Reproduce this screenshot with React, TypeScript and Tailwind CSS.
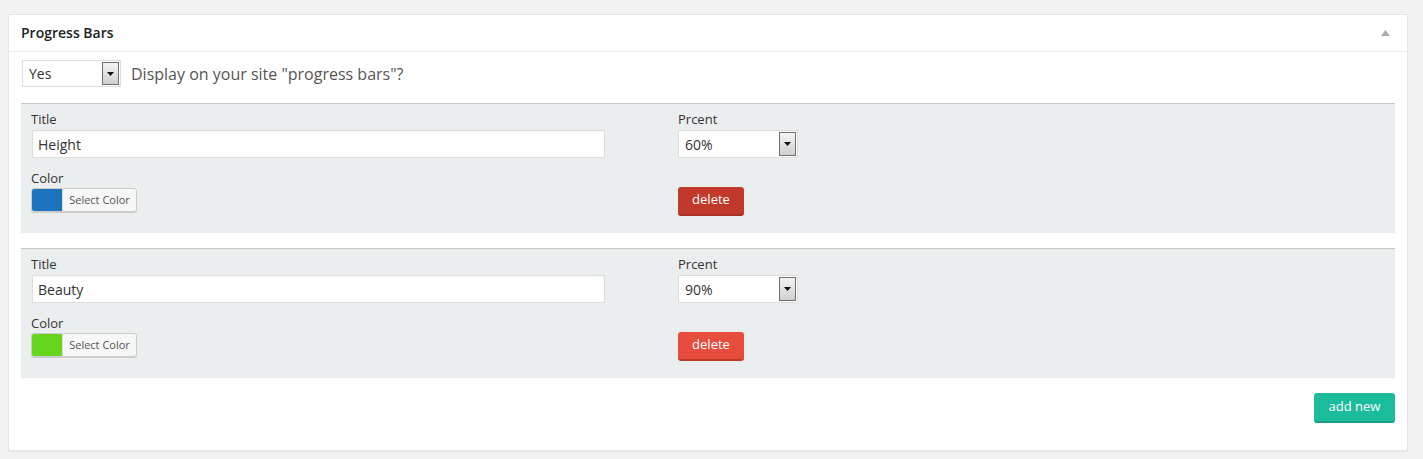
const font = { fontFamily: '"Open Sans", "Liberation Sans", sans-serif' };

type Bar = {
  title: string;
  percent: string;
  color: string;
  del: string;
  delBorder: string;
};

const bars: Bar[] = [
  { title: "Height", percent: "60%", color: "#1e73be", del: "bg-[#c0392b]", delBorder: "border-[#a93226]" },
  { title: "Beauty", percent: "90%", color: "#66d61c", del: "bg-[#e74c3c]", delBorder: "border-[#c0392b]" },
];

function SelectArrow() {
  return (
    <div className="flex h-full w-[17px] items-center justify-center border border-[#707070] bg-gradient-to-b from-[#f4f4f4] to-[#cfcfcf]">
      <svg width="7" height="4" viewBox="0 0 7 4">
        <path d="M0 0h7L3.5 4z" fill="#111" />
      </svg>
    </div>
  );
}

function FakeSelect({ value, width, height }: { value: string; width: string; height: string }) {
  return (
    <div className={`flex ${height} ${width} items-center border border-[#dddddd] bg-white pl-[6px] pr-px py-px`}>
      <span className="flex-1 text-[14px] text-[#333]">{value}</span>
      <SelectArrow />
    </div>
  );
}

function BarRow({ bar }: { bar: Bar }) {
  return (
    <div className="flex items-start border-t border-[#c8c8c8] bg-[#ebeeef] pl-[10px] pt-[6px] pb-[17px]">
      <div className="w-[647px]">
        <div className="h-[18px] text-[13px] leading-[18px] text-[#333]">Title</div>
        <div className="ml-px mt-[2px] flex h-[28px] w-[573px] items-center border border-[#dddddd] bg-white px-[5px] text-[14px] text-[#333] shadow-[inset_0_1px_2px_rgba(0,0,0,0.04)]">
          {bar.title}
        </div>
        <div className="mt-[11px] h-[18px] text-[13px] leading-[18px] text-[#333]">Color</div>
        <div className="mt-px flex h-[24px] w-[106px] overflow-hidden rounded-[3px] border border-[#cccccc] bg-[#f7f7f7] shadow-[0_1px_0_#ccc]">
          <div className="w-[30px]" style={{ backgroundColor: bar.color }} />
          <div className="flex flex-1 items-center justify-center border-l border-[#ddd] text-[11px] text-[#555]">
            Select Color
          </div>
        </div>
      </div>
      <div>
        <div className="h-[18px] text-[13px] leading-[18px] text-[#333]">Prcent</div>
        <div className="mt-[2px]">
          <FakeSelect value={bar.percent} width="w-[120px]" height="h-[28px]" />
        </div>
        <div
          className={`mt-[29px] flex h-[29px] w-[66px] items-center justify-center rounded-[3px] border-b-2 pb-px ${bar.delBorder} ${bar.del} text-[13px] text-white`}
        >
          delete
        </div>
      </div>
    </div>
  );
}

export default function App() {
  return (
    <div className="h-[459px] bg-[#f1f1f1] pt-[14px] pl-[8px]" style={font}>
      <div className="w-[1400px] border border-[#e5e5e5] bg-white shadow-[0_1px_1px_rgba(0,0,0,0.04)]">
        <div className="flex h-[37px] items-center justify-between border-b border-[#eeeeee] px-[12px] pb-px">
          <h3 className="text-[14px] font-semibold text-[#222]">Progress Bars</h3>
          <svg width="9" height="6" viewBox="0 0 9 6" className="mr-[5px]">
            <path d="M0 6L4.5 0L9 6z" fill="#aaaaaa" />
          </svg>
        </div>
        <div className="px-[12px] pt-[8px] pb-[27px]">
          <div className="flex items-center gap-[10px] pl-px">
            <FakeSelect value="Yes" width="w-[99px]" height="h-[27px]" />
            <span className="text-[16px] text-[#555]">Display on your site "progress bars"?</span>
          </div>
          <div className="mt-[16px] flex flex-col gap-[15px]">
            {bars.map((b) => (
              <BarRow key={b.title} bar={b} />
            ))}
          </div>
          <div className="mt-[15px] flex justify-end">
            <div className="flex h-[30px] w-[81px] items-center justify-center rounded-[3px] border-b-2 border-[#16a085] bg-[#1abc9c] pb-px text-[13px] text-white">
              add new
            </div>
          </div>
        </div>
      </div>
    </div>
  );
}
